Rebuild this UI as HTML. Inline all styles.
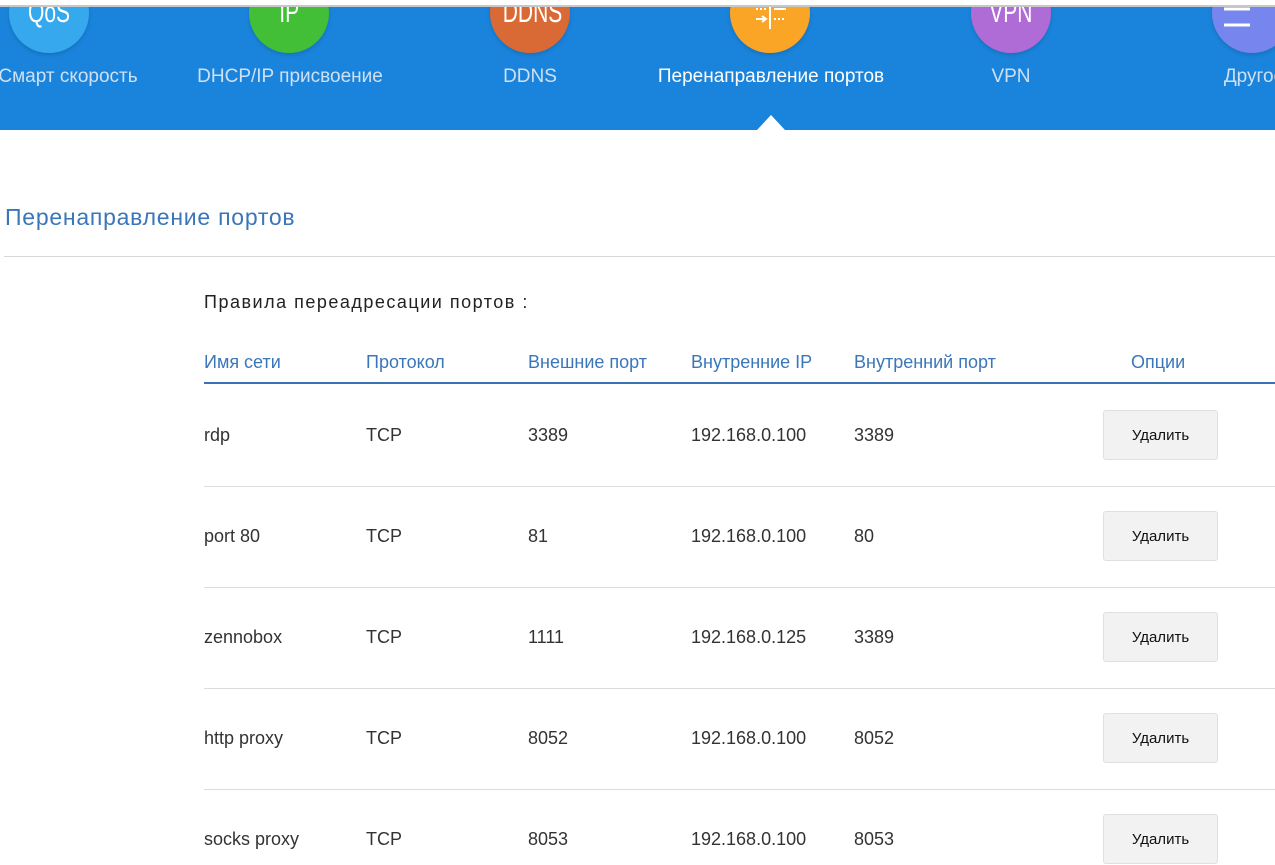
<!DOCTYPE html>
<html><head><meta charset="utf-8"><style>
body{margin:0;width:1275px;height:851px;overflow:hidden;background:#fff;font-family:"Liberation Sans","DejaVu Sans",sans-serif;position:relative}
.top{position:absolute;left:0;top:0;width:1275px;height:5px;background:#fff;border-bottom:2px solid #c8c8c8}
.nav{position:absolute;left:0;top:7px;width:1275px;height:123px;background:#1a84dc;overflow:hidden}
.c{position:absolute;width:80px;height:80px;border-radius:50%;top:-34px;color:#fff;text-align:center;font-size:30px;line-height:72px;box-shadow:0 2px 4px rgba(0,0,0,.15)}
.c span{display:inline-block;transform:scaleX(.7);position:relative;top:4px}
.l{position:absolute;top:59px;font-size:19px;color:#cfe0f3;white-space:nowrap;transform:translateX(-50%)}
.tri{position:absolute;left:757px;top:108px;width:0;height:0;border-left:14px solid transparent;border-right:14px solid transparent;border-bottom:15px solid #fff}
h2{position:absolute;left:5px;top:204px;margin:0;font-weight:normal;font-size:23px;letter-spacing:0.75px;color:#3a76ba}
.hr{position:absolute;left:4px;top:256px;width:1271px;height:1px;background:#d8d8d8}
.sub{position:absolute;left:204px;top:292px;font-size:18px;letter-spacing:1.5px;color:#222}
.th{position:absolute;top:352px;font-size:18px;color:#3a76ba}
.hl{position:absolute;left:204px;top:382px;width:1071px;height:2px;background:#3a73b5}
.td{position:absolute;font-size:18px;color:#333}
.sep{position:absolute;left:204px;width:1071px;height:1px;background:#dcdcdc}
.btn{position:absolute;left:1103px;width:113px;height:48px;border:1px solid #e0e0e0;border-radius:3px;background:#f2f2f2;font-size:15px;color:#111;text-align:center;line-height:50px}
</style></head><body>
<div class="top"></div>
<div class="nav">
<div class="c" style="left:9px;background:#36a9ee"><span>QoS</span></div>
<div class="c" style="left:249px;background:#42bf36"><span>IP</span></div>
<div class="c" style="left:490px;background:#d96a35"><span>DDNS</span></div>
<div class="c" style="left:730px;background:#faa526"><svg width="40" height="40" viewBox="0 0 40 40" style="position:absolute;left:20px;top:34px" stroke="#fff" stroke-width="2" fill="none"><path d="M20 0v22M6 12h10M12 9l4 3-4 3"/><path d="M24 12h12" stroke-dasharray="2 2"/><path d="M6 2h10" stroke-dasharray="2 2"/><path d="M24 2h12"/></svg></div>
<div class="c" style="left:971px;background:#b06cd6"><span>VPN</span></div>
<div class="c" style="left:1212px;background:#7786ef"><svg width="30" height="30" style="position:absolute;left:12px;top:34px"><path d="M0 2h26M0 18h26" stroke="#fff" stroke-width="3"/></svg></div>
<div class="l" style="left:68px">Смарт скорость</div>
<div class="l" style="left:290px">DHCP/IP присвоение</div>
<div class="l" style="left:530px">DDNS</div>
<div class="l" style="left:771px;color:#fff">Перенаправление портов</div>
<div class="l" style="left:1011px">VPN</div>
<div class="l" style="left:1254px">Другое</div>
<div class="tri"></div>
</div>
<h2>Перенаправление портов</h2>
<div class="hr"></div>
<div class="sub">Правила переадресации портов :</div>
<div class="th" style="left:204px">Имя сети</div>
<div class="th" style="left:366px">Протокол</div>
<div class="th" style="left:528px">Внешние порт</div>
<div class="th" style="left:691px">Внутренние IP</div>
<div class="th" style="left:854px">Внутренний порт</div>
<div class="th" style="left:1131px">Опции</div>
<div class="hl"></div>

<div class="td" style="left:204px;top:425px">rdp</div><div class="td" style="left:366px;top:425px">TCP</div><div class="td" style="left:528px;top:425px">3389</div><div class="td" style="left:691px;top:425px">192.168.0.100</div><div class="td" style="left:854px;top:425px">3389</div><div class="btn" style="top:410px">Удалить</div>
<div class="sep" style="top:486px"></div>
<div class="td" style="left:204px;top:526px">port 80</div><div class="td" style="left:366px;top:526px">TCP</div><div class="td" style="left:528px;top:526px">81</div><div class="td" style="left:691px;top:526px">192.168.0.100</div><div class="td" style="left:854px;top:526px">80</div><div class="btn" style="top:511px">Удалить</div>
<div class="sep" style="top:587px"></div>
<div class="td" style="left:204px;top:627px">zennobox</div><div class="td" style="left:366px;top:627px">TCP</div><div class="td" style="left:528px;top:627px">1111</div><div class="td" style="left:691px;top:627px">192.168.0.125</div><div class="td" style="left:854px;top:627px">3389</div><div class="btn" style="top:612px">Удалить</div>
<div class="sep" style="top:688px"></div>
<div class="td" style="left:204px;top:728px">http proxy</div><div class="td" style="left:366px;top:728px">TCP</div><div class="td" style="left:528px;top:728px">8052</div><div class="td" style="left:691px;top:728px">192.168.0.100</div><div class="td" style="left:854px;top:728px">8052</div><div class="btn" style="top:713px">Удалить</div>
<div class="sep" style="top:789px"></div>
<div class="td" style="left:204px;top:829px">socks proxy</div><div class="td" style="left:366px;top:829px">TCP</div><div class="td" style="left:528px;top:829px">8053</div><div class="td" style="left:691px;top:829px">192.168.0.100</div><div class="td" style="left:854px;top:829px">8053</div><div class="btn" style="top:814px">Удалить</div>
</body></html>
